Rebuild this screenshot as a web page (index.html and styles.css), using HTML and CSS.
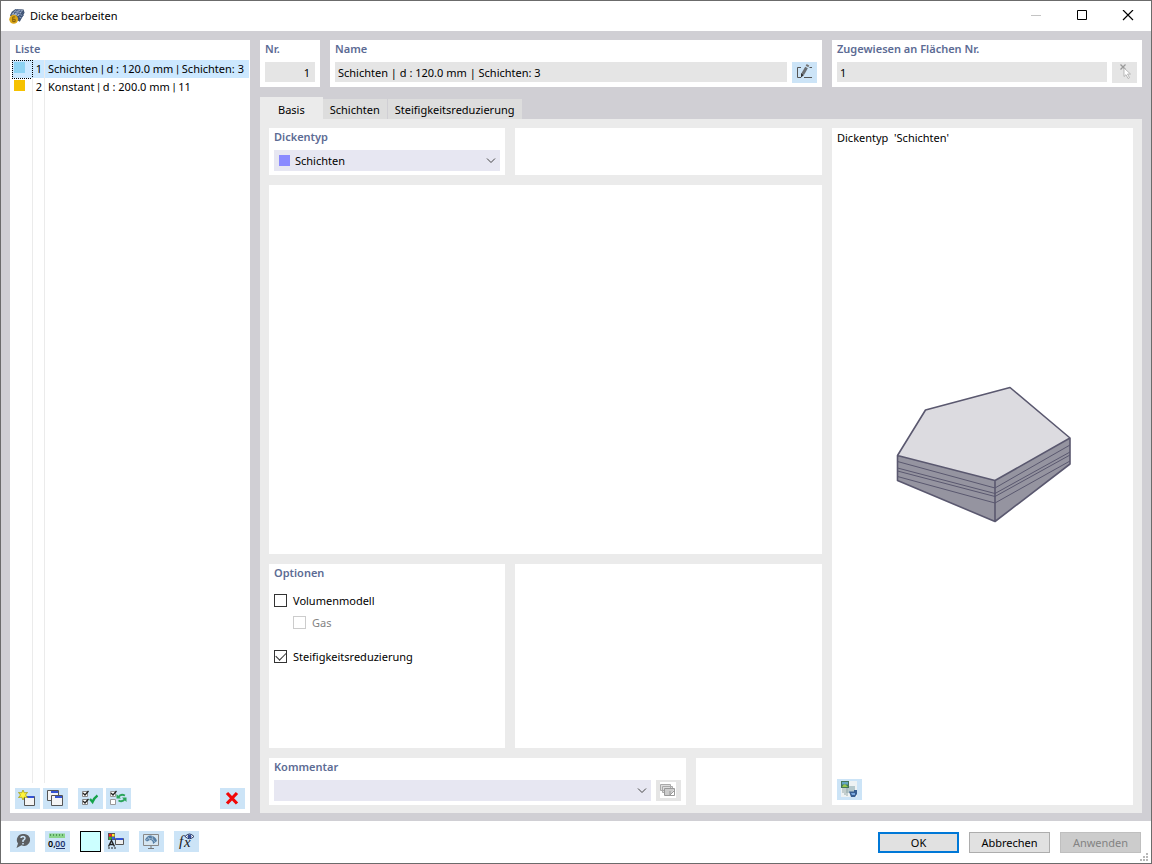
FILE: index.html
```html
<!DOCTYPE html>
<html lang="de">
<head>
<meta charset="utf-8">
<meta name="viewport" content="width=device-width, initial-scale=1">
<title>Dicke bearbeiten</title>
<link rel="stylesheet" href="styles.css">
</head>
<body>
<div class="window">
  <header class="titlebar">
    <svg class="app-icon" viewBox="0 0 17 17" aria-hidden="true">
      <path d="M1 8 3 4 7 1 15.500 1.500 16.500 5 11.500 14.500 7 12z" fill="#3f5271"/>
      <path d="M2.500 7 7.500 1.500 15 2.500 10 8.500z" fill="#a3b4cf"/>
      <path d="M5 4.500 12 6M7 2.500 13.500 4M9 1.500 5 7M13 2 8 8M15.500 4.500 10 11M15.500 7.500 11 13" stroke="#4a5f86" fill="none"/>
      <path d="M12 7 14 8M11 9.500 13 10.500" stroke="#8fa1be"/>
      <circle cx="5" cy="12" r="4.700" fill="#dca719"/>
      <path d="M6.500 9.500H4V14.500H6.500V12H4" stroke="#76570b" fill="none"/>
    </svg>
    <h1 class="title">Dicke bearbeiten</h1>
    <div class="window-controls">
      <button class="win-btn" type="button" aria-label="Minimieren" disabled><svg viewBox="0 0 12 12"><path d="M1 5.500H11" stroke="#c4c4c4"/></svg></button>
      <button class="win-btn" type="button" aria-label="Maximieren"><svg viewBox="0 0 12 12"><path d="M1.500 .500H10.500V9.500H1.500Z" stroke="#000" fill="none"/></svg></button>
      <button class="win-btn" type="button" aria-label="Schließen"><svg viewBox="0 0 12 12"><path d="M1 0 11 10M11 0 1 10" stroke="#000" stroke-width="1.200"/></svg></button>
    </div>
  </header>

  <main class="workspace">
    <section class="panel list-panel">
      <h2 class="panel-title list-title">Liste</h2>
      <ul class="list">
        <li class="list-row selected"><span class="cell cell-swatch"><i class="swatch swatch-sky"></i></span><span class="cell cell-number">1</span><span class="cell-name">Schichten <span class="sep">|</span> d : 120.0 mm <span class="sep">|</span> Schichten: 3</span></li>
        <li class="list-row"><span class="cell cell-swatch"><i class="swatch swatch-gold"></i></span><span class="cell cell-number">2</span><span class="cell-name">Konstant <span class="sep">|</span> d : 200.0 mm <span class="sep">|</span> 11</span></li>
        <li class="list-row list-rest" aria-hidden="true"><span class="cell"></span><span class="cell"></span></li>
      </ul>
      <div class="toolbar list-toolbar">
        <button class="tool" type="button" aria-label="Neu"><svg viewBox="0 0 25 21">
          <path d="M9.500 8.500H19.500V17.500H9.500Z" fill="#f4f4f4" stroke="#555"/><path d="M12 8H19V10H12Z" fill="#3554d4"/>
          <path d="M8 2 9.300 4.800 12.500 4.500 10.500 7 12.500 9.500 9.300 9.200 8 12 6.700 9.200 3.500 9.500 5.500 7 3.500 4.500 6.700 4.800Z" fill="#fff43b" stroke="#9c9300" stroke-width=".700"/></svg></button>
        <button class="tool" type="button" aria-label="Kopieren"><svg viewBox="0 0 25 21">
          <path d="M4.500 2.500H15.500V12.500H4.500Z" fill="#f4f4f4" stroke="#555"/><path d="M8 3H15V5H8Z" fill="#3554d4"/>
          <path d="M8.500 7.500H19.500V17.500H8.500Z" fill="#f4f4f4" stroke="#555"/><path d="M12 8H19V10H12Z" fill="#3554d4"/></svg></button>
        <button class="tool group-start" type="button" aria-label="Alle auswählen"><svg viewBox="0 0 25 21">
          <path d="M4.500 3.500H9.500V8.500H4.500ZM4.500 11.500H9.500V16.500H4.500Z" fill="#fff" stroke="#888"/><path d="M5 5 7 7 10.500 3M5 13 7 15 10.500 11" stroke="#222" stroke-width="1.300" fill="none"/>
          <path d="M12 11 14.500 14Q16 10 19.500 7.500" stroke="#16a34b" stroke-width="2.300" fill="none"/></svg></button>
        <button class="tool" type="button" aria-label="Auswahl umkehren"><svg viewBox="0 0 25 21">
          <path d="M4.500 3.500H9.500V8.500H4.500ZM4.500 11.500H9.500V16.500H4.500Z" fill="#fff" stroke="#999"/><path d="M5 5 7 7 10.500 3" stroke="#222" stroke-width="1.300" fill="none"/>
          <path d="M12.500 9Q14.500 5.500 19 7.500M19 11Q16.500 14.500 12.500 12.500" stroke="#2ba55a" stroke-width="1.800" fill="none"/><path d="M10.500 6V10.500H15ZM20.500 14V9.500H16Z" fill="#2ba55a"/></svg></button>
        <button class="tool group-end" type="button" aria-label="Löschen"><svg viewBox="0 0 25 21"><path d="M7 5 17 15.500M17 5 7 15.500" stroke="#f20808" stroke-width="3.200"/></svg></button>
      </div>
    </section>

    <div class="editor">
      <div class="header-row">
        <section class="panel number-panel">
          <label class="panel-title" for="number">Nr.</label>
          <input class="field field-right" id="number" value="1" readonly>
        </section>
        <section class="panel name-panel">
          <label class="panel-title" for="name">Name</label>
          <div class="field-row">
            <input class="field" id="name" value="Schichten | d : 120.0 mm | Schichten: 3" readonly>
            <button class="tool" type="button" aria-label="Name bearbeiten"><svg viewBox="0 0 25 21">
              <path d="M9 5.500H5.500V15.500H9M12 15.500H20M17.500 5.500H20" stroke="#555" fill="none"/><path d="M10.800 12 14.500 5.500" stroke="#6a6e72" stroke-width="3"/><path d="M15 4.500 16 2.800" stroke="#777" stroke-width="3"/><path d="M9 11 12 13 9 15.500Z" fill="#333"/></svg></button>
          </div>
        </section>
        <section class="panel assigned-panel">
          <label class="panel-title" for="assigned">Zugewiesen an Flächen Nr.</label>
          <div class="field-row">
            <input class="field" id="assigned" value="1" readonly>
            <button class="tool tool-off" type="button" aria-label="Flächen wählen" disabled><svg viewBox="0 0 25 21">
              <path d="M8.500 2.500 13.500 7.500M13.500 2.500 8.500 7.500" stroke="#999" stroke-width="1.300"/><path d="M12 6V14.500L14 12.700 16 16.500 17.500 15.700 15.500 12H18.500Z" fill="#fff" stroke="#aaa" stroke-width=".800"/></svg></button>
          </div>
        </section>
      </div>

      <div class="tabs" role="tablist">
        <button class="tab active" type="button" role="tab" aria-selected="true">Basis</button>
        <button class="tab" type="button" role="tab" aria-selected="false">Schichten</button>
        <button class="tab" type="button" role="tab" aria-selected="false">Steifigkeitsreduzierung</button>
      </div>

      <div class="page" role="tabpanel">
        <div class="page-main">
          <div class="split">
            <section class="panel narrow">
              <label class="panel-title" for="type">Dickentyp</label>
              <div class="combo">
                <select class="select select-swatch" id="type"><option>Schichten</option></select>
                <svg class="chevron" viewBox="0 0 10 6" aria-hidden="true"><path d="M1 .500 5 4.500 9 .500"/></svg>
              </div>
            </section>
            <section class="panel wide"></section>
          </div>
          <section class="stage"></section>
          <div class="split options-row">
            <section class="panel narrow">
              <h2 class="panel-title">Optionen</h2>
              <div class="options">
                <label class="option"><input class="check" type="checkbox">Volumenmodell</label>
                <label class="option option-sub"><input class="check" type="checkbox" disabled>Gas</label>
                <label class="option option-last"><input class="check" type="checkbox" checked>Steifigkeitsreduzierung</label>
              </div>
            </section>
            <section class="panel wide"></section>
          </div>
          <div class="split">
            <section class="panel wide">
              <label class="panel-title" for="comment">Kommentar</label>
              <div class="field-row">
                <div class="combo">
                  <select class="select" id="comment"><option></option></select>
                  <svg class="chevron" viewBox="0 0 10 6" aria-hidden="true"><path d="M1 .500 5 4.500 9 .500"/></svg>
                </div>
                <button class="tool tool-off" type="button" aria-label="Kommentare" disabled><svg viewBox="0 0 25 21">
                  <path d="M4 2H20V18H4Z" fill="#fff"/><path d="M4.500 4.500H14.500V10.500H4.500ZM6.500 6.500H16.500V12.500H6.500Z" fill="#ddd" stroke="#aaa"/><path d="M8.500 8.500H18.500V15.500H8.500Z" fill="#ccc" stroke="#999"/><path d="M14 15 18 10V15Z" fill="#fff"/><path d="M14 11V15L18 11" stroke="#999" fill="none"/></svg></button>
              </div>
            </section>
            <section class="panel comment-side"></section>
          </div>
        </div>
        <section class="panel preview">
          <p class="preview-title">Dickentyp&nbsp; 'Schichten'</p>
          <div class="preview-stage">
            <svg class="plate" viewBox="0 0 176 137" role="img" aria-label="Platte mit Schichten">
              <path d="M1.500 69.500 99 94.500 174 52V78L99 135.500 1.500 94.500Z" fill="#9594a0"/>
              <path d="M1.500 69.500 29.500 24 114 1.500 174 52 99 94.500Z" fill="#dcdbe0"/>
              <g fill="none" stroke="#5a586f" stroke-linejoin="round">
                <path stroke-width="1.600" d="M1.500 69.500 29.500 24 114 1.500 174 52 99 94.500ZM1.500 69.500V94.500L99 135.500 174 78V52M99 94.500V135.500"/>
                <path d="M1.500 75.500 99 102 174 59M1.500 82 99 107.500 174 66M1.500 85 99 110.500 174 69M1.500 90.500 99 117 174 75"/>
              </g>
            </svg>
          </div>
          <button class="tool preview-tool" type="button" aria-label="Grafik"><svg viewBox="0 0 25 21">
            <path d="M4 2H20V18H4Z" fill="#eef2f3"/><path d="M9 7H18V14H9Z" fill="#b5c8cc"/><path d="M4 2H12V9H4Z" fill="#45765b"/><path d="M5 3H11V5.500H5Z" fill="#64a6c4"/><path d="M5 8Q7 4 9 6L11 8Z" fill="#97c94d"/><path d="M6 9V14M8 9V16M10 9V17" stroke="#98aaa9"/>
            <path d="M12 12.500H17V11H20V15L18 18H14Z" fill="#355d91"/><path d="M14 14H18V16H15Z" fill="#79a8df"/></svg></button>
        </section>
      </div>
    </div>
  </main>

  <footer class="footer">
    <div class="toolbar">
      <button class="tool" type="button" aria-label="Hilfe"><svg viewBox="0 0 25 21"><path d="M13 3A6 6 0 1 1 11.500 14.300L6.500 17 8 12.500A6 6 0 0 1 13 3Z" fill="#5c5f62"/><path d="M11 7Q11 5.500 13 5.500T15 7.300Q15 8.500 13 9.500V11M13 12V13.500" stroke="#cce4f7" stroke-width="1.500" fill="none"/></svg></button>
      <button class="tool group-start" type="button" aria-label="Einheiten"><svg viewBox="0 0 25 21"><path d="M4 2.500H20V7H4Z" fill="#8bd58d"/><path d="M5.500 3V5M8.500 3V5M11.500 3V5M14.500 3V5M17.500 3V5" stroke="#519a58"/><text class="units" x="3" y="16">0,</text><text class="units units-blue" x="10" y="16">00</text><path d="M11 17.500H20" stroke="#25366d"/></svg></button>
      <button class="color-box group-start" type="button" aria-label="Farbe"></button>
      <button class="tool" type="button" aria-label="Darstellung"><svg viewBox="0 0 25 21"><path d="M4 2H11V9H4Z" fill="#555"/><path d="M5 3H7.500V5.500H5Z" fill="#f22"/><path d="M8 3H10.500V5.500H8Z" fill="#ffe82d"/><path d="M5 6H7.500V8.500H5Z" fill="#30b62d"/><path d="M8 6H10.500V8.500H8Z" fill="#3159ef"/><path d="M4.500 15.500 7.500 9.500 10.500 15.500M6 13.500H9" stroke="#222" stroke-width="1.400" fill="none"/><path d="M4 17H12" stroke="#222" stroke-dasharray="2 1"/><path d="M11.500 7.500H19.500V13.500H11.500Z" fill="#eee" stroke="#555"/><path d="M12 7H19V9H12Z" fill="#3554d4"/></svg></button>
      <button class="tool group-start" type="button" aria-label="Ansicht"><svg viewBox="0 0 25 21"><path d="M4.500 3.500H19.500V14.500H4.500Z" fill="#d6e6f1" stroke="#888"/><path d="M12 15V17M9 17.500H15" stroke="#777"/><path d="M6 9Q8 4 12 4.500 17 5.500 18 10L14 13Q14 9 11 9L8 10.500Z" fill="#567fa6"/><path d="M7 9Q12 5 16 11M9 6 11 9M13 5 14 9" stroke="#b2c9dc" stroke-width=".700" fill="none"/></svg></button>
      <button class="tool group-start" type="button" aria-label="Formel"><svg viewBox="0 0 25 21"><text class="formula" x="5" y="15">f</text><text class="formula" x="10" y="16">x</text><path d="M11 5.500Q15.500 .500 20 5.500 15.500 10 11 5.500Z" fill="#fff" stroke="#26365e"/><circle cx="15.500" cy="5.500" r="2" fill="#314a96"/></svg></button>
    </div>
    <div class="actions">
      <button class="action primary" type="button">OK</button>
      <button class="action" type="button">Abbrechen</button>
      <button class="action" type="button" disabled>Anwenden</button>
    </div>
    <svg class="grip" viewBox="0 0 8 8" aria-hidden="true"><path d="M6 0H8V2H6ZM3 3H5V5H3ZM6 3H8V5H6ZM0 6H2V8H0ZM3 6H5V8H3ZM6 6H8V8H6Z" fill="#b8b8b8"/></svg>
  </footer>
</div>
</body>
</html>
```

FILE: styles.css
```css
* { box-sizing: border-box; }

body {
  margin: 0;
  font-family: "Noto Sans", "Open Sans", sans-serif;
  font-size: 11px;
  line-height: 18px;
  color: #000;
}

button, input, select { font: inherit; color: inherit; margin: 0; border-radius: 0; }
h1, h2, p, ul { margin: 0; padding: 0; }
svg { display: block; }

.window {
  display: flex;
  flex-direction: column;
  min-height: 100vh;
  border: 1px solid #6b6b6b;
  background: #fff;
}

.titlebar { display: flex; align-items: center; height: 30px; padding-left: 8px; }
.app-icon { width: 16px; height: 16px; }
.title { margin-left: 5px; font-size: 11px; font-weight: 400; }
.window-controls { display: flex; margin-left: auto; }
.win-btn { display: grid; place-items: center; width: 46px; height: 30px; padding: 0; border: 0; background: none; }
.win-btn svg { width: 12px; height: 12px; }

.workspace { display: flex; flex: 1; gap: 10px; padding: 9px 9px 8px; background: #d0cfd4; }
.panel { background: #fff; padding: 0 5px 4px; }
.panel-title { display: block; height: 22px; font-size: 11px; font-weight: 600; line-height: 18px; color: #5c6b94; }

.list-panel { display: flex; flex-direction: column; flex: 0 0 240px; min-width: 0; padding: 0; }
.list-title { height: 20px; padding-left: 5px; }
.list { display: flex; flex: 1; flex-direction: column; list-style: none; padding: 0 1px 0 2px; }
.list-row { display: grid; grid-template-columns: 21px 12px 1fr; height: 18px; }
.list-row.selected { background: #cce8ff; }
.list-rest { flex: 1; height: auto; }
.cell { border-right: 1px solid #ebebeb; }
.cell-swatch { padding: 2px; }
.selected .cell-swatch { border: 1px dotted #000; padding: 1px; }
.cell-number { text-align: right; padding-right: 2px; }
.cell-name { padding-left: 3px; white-space: nowrap; }
.sep { font-family: Roboto, sans-serif; }
.swatch { display: block; width: 11px; height: 11px; }
.swatch-sky { background: #8dd3f3; }
.swatch-gold { background: #f6c200; }

.toolbar { display: flex; gap: 3px; }
.list-toolbar { padding: 5px 5px 4px; }
.group-start { margin-left: 7px; }
.group-end { margin-left: auto; }
.tool { flex: none; width: 25px; height: 21px; padding: 0; border: 0; background: #cce4f7; }
.tool svg { width: 25px; height: 21px; }
.tool-off { background: #e5e5e5; }
.color-box { width: 21px; height: 21px; padding: 0; border: 1px solid #000; background: #ccffff; }

.editor { display: flex; flex: 1; flex-direction: column; min-width: 0; }
.header-row { display: flex; gap: 10px; margin-bottom: 10px; }
.number-panel { flex: 0 0 60px; }
.name-panel { flex: 1; }
.assigned-panel { flex: 0 0 310px; }
.field-row { display: flex; gap: 5px; }
.field { display: block; flex: 1; width: 100%; min-width: 0; height: 20px; padding: 1px 3px 0; border: 0; background: #e5e5e5; }
.field-right { padding-right: 5px; text-align: right; }

.tabs { display: flex; align-items: flex-end; height: 22px; }
.tab { height: 20px; padding: 1px 7px 0; border: 0; border-right: 1px solid #d0cfd4; background: #dddddd; }
.tab.active { height: 22px; padding: 3px 18px 0; border: 0; background: #ebebeb; }

.page { display: flex; flex: 1; gap: 10px; padding: 9px 9px 8px; background: #ebebeb; }
.page-main { display: flex; flex: 1; flex-direction: column; gap: 10px; min-width: 0; }
.split { display: flex; gap: 10px; }
.narrow { flex: 0 0 236px; }
.wide { flex: 1; }
.stage { flex: 2; background: #fff; }
.options-row { flex: 1; }
.comment-side { flex: 0 0 126px; }

.combo { position: relative; flex: 1; }
.select { display: block; appearance: none; width: 100%; height: 21px; padding: 0 20px 0 5px; border: 0; background: #e7e7f2; }
.select-swatch { padding-left: 21px; background: linear-gradient(#8a8aff, #8a8aff) 5px 5px / 11px 11px no-repeat #e7e7f2; }
.chevron { position: absolute; right: 4px; top: 8px; width: 10px; height: 6px; fill: none; stroke: #444; pointer-events: none; }

.options { display: flex; flex-direction: column; gap: 4px; padding-top: 6px; }
.option { display: flex; align-items: center; gap: 6px; }
.option-sub { padding-left: 19px; color: #838383; }
.option-last { margin-top: 12px; }
.check { appearance: none; display: grid; place-items: center; width: 13px; height: 13px; border: 1px solid #333; background: #fff; }
.check:disabled { border-color: #ccc; }
.check:checked::after { content: ""; width: 9px; height: 5px; border: solid #333; border-width: 0 0 1px 1px; transform: rotate(-45deg); margin-bottom: 3px; }

.preview { display: flex; flex: 0 0 301px; flex-direction: column; padding: 1px 5px 5px; }
.preview-stage { display: grid; flex: 1; place-items: center; padding: 0 0 18px 2px; }
.plate { width: 176px; height: 137px; }

.footer { position: relative; display: flex; justify-content: space-between; padding: 10px 10px 10px 9px; }
.actions { display: flex; gap: 10px; }
.action { width: 81px; height: 21px; margin-top: 1px; padding: 0; border: 1px solid #adadad; background: #e1e1e1; }
.action.primary { border: 2px solid #0078d7; }
.action:disabled { border-color: #bfbfbf; background: #cccccc; color: #838383; }
.grip { position: absolute; right: 3px; bottom: 2px; width: 8px; height: 8px; }

.units { font-family: "Noto Sans", sans-serif; font-size: 9px; font-weight: 600; }
.units-blue { fill: #25366d; }
.formula { font-family: "Liberation Serif", serif; font-size: 15px; font-style: italic; fill: #222; }
```
